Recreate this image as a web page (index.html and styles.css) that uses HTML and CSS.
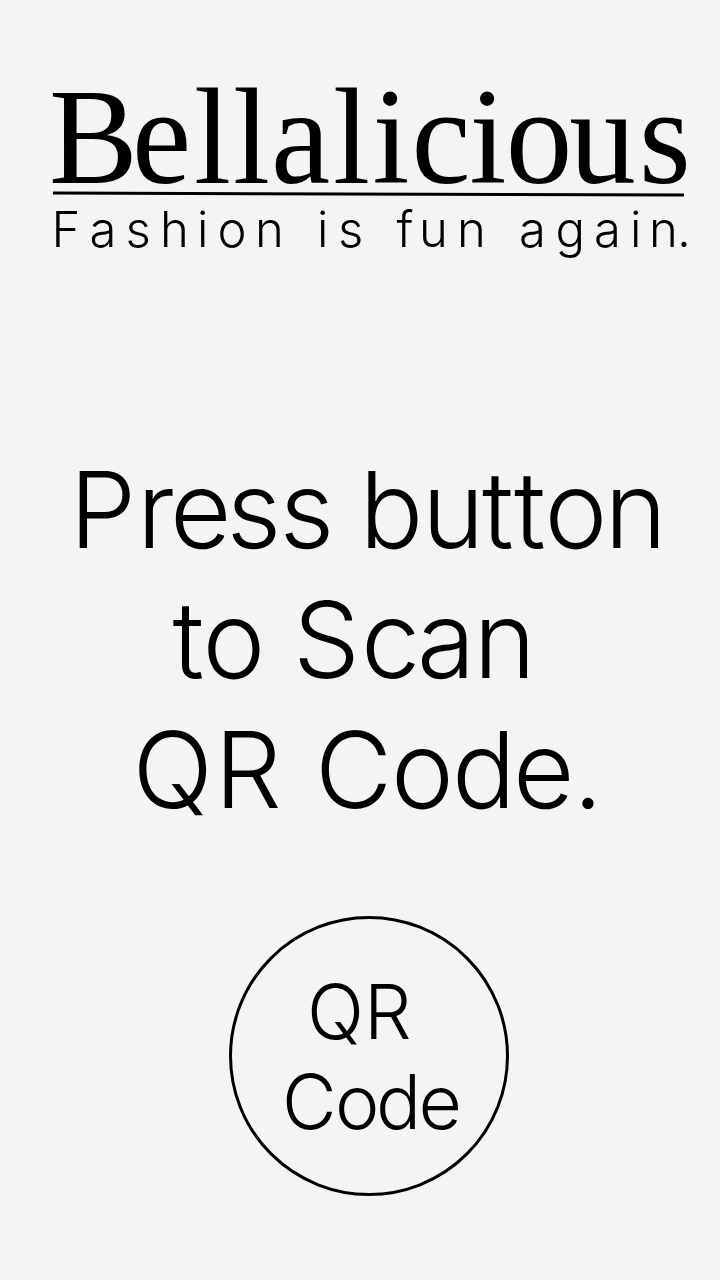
FILE: index.html
```
<!DOCTYPE html>
<html lang="en">
<head>
<meta charset="utf-8">
<title>Bellalicious</title>
<link rel="stylesheet" href="styles.css">
</head>
<body>
<main class="screen">
  <header class="brand">
    <svg class="logo" width="720" height="115" viewBox="0 0 720 115" role="img" aria-label="Bellalicious">
      <text class="logo-text" transform="scale(.965 1)" y="98" x="50.8 136.8 201 241.4 280.8 345.1 386 426.4 486.5 524 590 662.2">Bellalicious</text>
      <path class="logo-rule" d="M53 108L684 110"/>
    </svg>
    <svg class="tagline" width="720" height="70" viewBox="0 0 720 70">
      <text class="light small" y="47" x="51.6 89.5 125.5 160 197 217.5 255 290 317 338 370 396.5 419 457 490 519 555.5 594 630 649 677">Fashion is fun again.</text>
    </svg>
  </header>
  <svg class="prompt" width="720" height="400" viewBox="0 0 720 400">
    <text class="light large" y="108" x="69.5 137 170 226.5 279.5 335 359.5 422 482 514 544.5 604.5">Press button</text>
    <text class="light large" y="238" x="172.5 202.5 265 293 361 417 473.5">to Scan</text>
    <text class="light large" y="368" x="132.5 214.5 285 315 391 452 513 573">QR Code.</text>
  </svg>
  <button class="scan">
    <svg width="274" height="274" viewBox="232 919 274 274">
      <text class="light medium" y="1039" x="307 364">QR</text>
      <text class="light medium" y="1129" x="282 335 376 418.5">Code</text>
    </svg>
  </button>
</main>
</body>
</html>
```
FILE: styles.css
```
body { margin: 0; background: #f4f4f6; color: #000; }
.screen { width: 720px; height: 1280px; display: flex; flex-direction: column; overflow: hidden; }
svg { display: block; overflow: visible; }
.brand { padding-top: 85px; height: 355px; box-sizing: border-box; }
.logo-text { font: 138px "Liberation Serif", serif; }
.logo-rule { stroke: #000; stroke-width: 3; }
.light { font-family: Inter, sans-serif; font-weight: 300; font-variant-ligatures: none; fill: #000; }
.small { font-size: 49px; }
.medium { font-size: 75px; }
.large { font-size: 106px; }
.prompt { margin-top: 85px; flex: none; }
.scan { width: 280px; height: 280px; box-sizing: border-box; margin: 76px 0 0 229px; padding: 0; border: 3px solid #000; border-radius: 50%; background: none; color: inherit; flex: none; }
```
